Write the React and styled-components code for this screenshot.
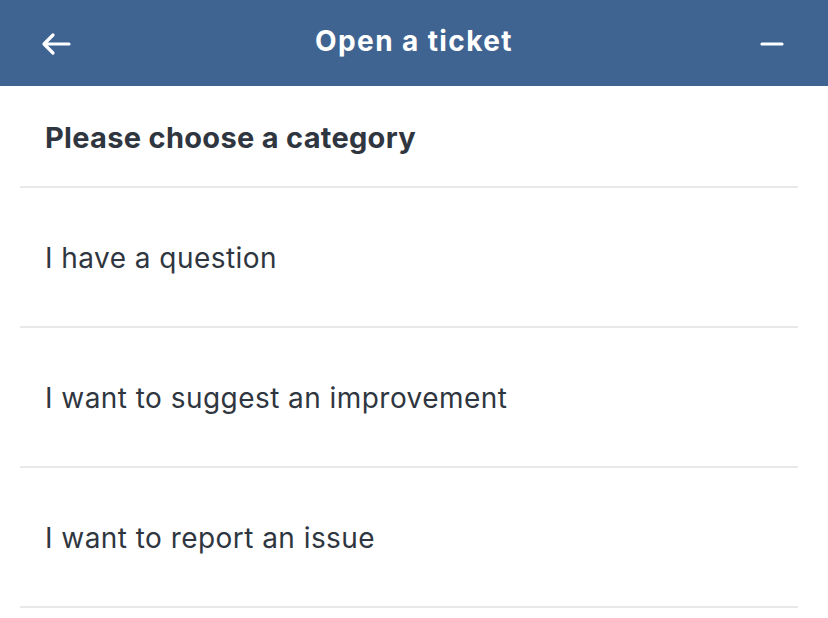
import React from 'react';
import styled, { createGlobalStyle } from 'styled-components';

const GlobalStyle = createGlobalStyle`
  body {
    margin: 0;
    background: #ffffff;
    font-family: Inter, "Liberation Sans", sans-serif;
  }
`;

const categories = [
  'I have a question',
  'I want to suggest an improvement',
  'I want to report an issue',
];

const App = () => {
  return (
    <>
      <GlobalStyle />
      <Page>
        <Header>
          <IconButton aria-label="Back">
            <svg width="30" height="24" viewBox="0 0 30 24" fill="none">
              <path
                d="M28 12H4M12 3L3 12L12 21"
                stroke="#fff"
                strokeWidth="3.2"
                strokeLinecap="round"
                strokeLinejoin="round"
              />
            </svg>
          </IconButton>
          <Title>Open a ticket</Title>
          <IconButton aria-label="Minimize">
            <svg width="24" height="6" viewBox="0 0 24 6" fill="none">
              <path d="M2 3H22" stroke="#fff" strokeWidth="3.2" strokeLinecap="round" />
            </svg>
          </IconButton>
        </Header>
        <List>
          <Heading>Please choose a category</Heading>
          {categories.map((c) => (
            <Row key={c}>{c}</Row>
          ))}
        </List>
      </Page>
    </>
  );
};

const Page = styled.div`
  width: 828px;
  min-height: 618px;
  background: #fff;
`;

const Header = styled.div`
  height: 86px;
  background: #3f6492;
  display: flex;
  align-items: center;
  justify-content: space-between;
  padding: 0 40px;
  box-sizing: border-box;
`;

const IconButton = styled.div`
  width: 32px;
  height: 32px;
  display: flex;
  align-items: center;
  justify-content: center;
  padding-top: 2px;
`;

const Title = styled.div`
  color: #fff;
  font-size: 28px;
  font-weight: 700;
  letter-spacing: 1.4px;
  margin-bottom: 4px;
`;

const List = styled.div`
  margin: 0 30px 0 20px;
`;

const Heading = styled.div`
  height: 102px;
  display: flex;
  align-items: center;
  padding: 0 25px;
  padding-top: 2px;
  box-sizing: border-box;
  border-bottom: 2px solid #e8e8e8;
  color: #2f3640;
  font-size: 29px;
  font-weight: 700;
  letter-spacing: 0.3px;
`;

const Row = styled.div`
  height: 140px;
  display: flex;
  align-items: center;
  padding: 0 25px;
  padding-top: 2px;
  box-sizing: border-box;
  border-bottom: 2px solid #e8e8e8;
  color: #2f3640;
  font-size: 28px;
  font-weight: 400;
  letter-spacing: 0.45px;
`;

export default App;
